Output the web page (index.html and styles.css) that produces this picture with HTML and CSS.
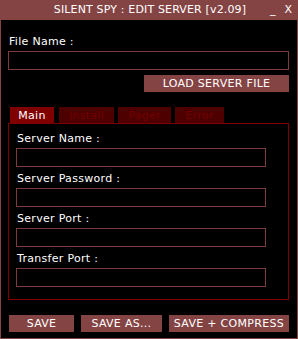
FILE: index.html
```html
<!DOCTYPE html>
<html>
<head>
<meta charset="utf-8">
<link rel="stylesheet" href="styles.css">
</head>
<body>
<div class="window">
  <div class="titlebar">
    <span class="title">SILENT SPY : EDIT SERVER [v2.09]</span>
    <span class="controls"><span class="min">_</span><span class="close">X</span></span>
  </div>
  <div class="content">
    <div class="label first">File Name :</div>
    <div class="input wide"></div>
    <div class="load-row"><div class="btn load">LOAD SERVER FILE</div></div>
    <div class="tabs">
      <div class="tab active t-main">Main</div>
      <div class="tab t-install">Install</div>
      <div class="tab t-pager">Pager</div>
      <div class="tab t-error">Error</div>
    </div>
    <div class="panel">
      <div class="label">Server Name :</div>
      <div class="input field"></div>
      <div class="label">Server Password :</div>
      <div class="input field"></div>
      <div class="label">Server Port :</div>
      <div class="input field"></div>
      <div class="label">Transfer Port :</div>
      <div class="input field"></div>
    </div>
    <div class="actions">
      <div class="btn b-save">SAVE</div>
      <div class="btn b-saveas">SAVE AS...</div>
      <div class="btn b-compress">SAVE + COMPRESS</div>
    </div>
  </div>
</div>
</body>
</html>
```
FILE: styles.css
```css
* { box-sizing: border-box; }
html, body { margin: 0; padding: 0; background: #000; }
body { font-family: "DejaVu Sans", sans-serif; font-size: 11px; color: #fff; }
.window {
  width: 298px; height: 339px;
  border: 1px solid #844444; border-top: 0;
  background: #000;
  display: flex; flex-direction: column;
}
.titlebar {
  height: 20px; margin: 0 -1px;
  background: #844444;
  display: grid; align-items: center;
}
.title {
  grid-area: 1 / 1; justify-self: center;
  line-height: 20px; letter-spacing: 0.15px; padding-left: 2px;
}
.controls {
  grid-area: 1 / 1; justify-self: end;
  display: flex; gap: 9px; padding-right: 6px; line-height: 20px;
}
.content { padding: 0 8px 0 7px; display: flex; flex-direction: column; }
.label { height: 21px; line-height: 14px; padding-top: 5px; padding-left: 1px; letter-spacing: 0.3px; }
.label.first { height: 31px; padding-top: 15px; }
.input { height: 19px; border: 1px solid #7b3d3d; background: #000; }
.input.wide { width: 281px; }
.input.field { width: 250px; }
.load-row { display: flex; justify-content: flex-end; margin-top: 5px; }
.btn {
  background: #844444; color: #fff; height: 17px;
  display: flex; align-items: center; justify-content: center;
  letter-spacing: 0.3px;
}
.load { width: 145px; }
.tabs { display: flex; margin-top: 15px; padding-left: 2px; gap: 4px; height: 16px; }
.tab {
  height: 16px; background: #4e0000; color: #720000;
  display: flex; align-items: center; justify-content: center;
  letter-spacing: 0.3px;
}
.tab.active { background: #800000; color: #fff; }
.t-main { width: 44px; margin-right: 1px; }
.t-install { width: 55px; }
.t-pager { width: 53px; }
.t-error { width: 49px; }
.panel {
  width: 281px; height: 177px;
  border: 1px solid #800000;
  padding: 3px 7px 0 7px;
}
.actions { display: flex; gap: 7px; margin-top: 15px; padding-left: 1px; }
.b-save { width: 66px; }
.b-saveas { width: 82px; }
.b-compress { width: 122px; }
```
